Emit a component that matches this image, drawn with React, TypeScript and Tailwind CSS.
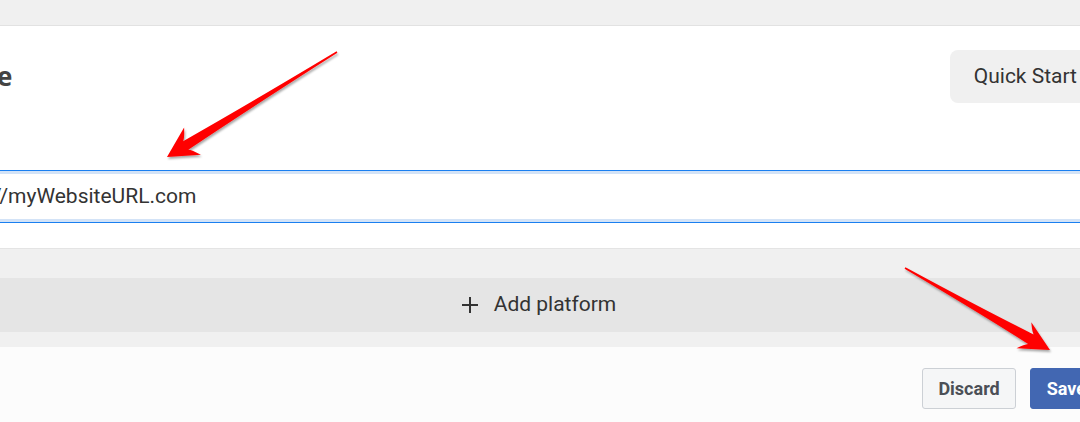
import React from 'react'

type Pt = [number, number]

// builds a tapered red pointer from tail to tip
const arrowPath = (tail: Pt, tip: Pt, shaft = 5, barb = 16) => {
  const dx = tip[0] - tail[0]
  const dy = tip[1] - tail[1]
  const len = Math.hypot(dx, dy)
  const d: Pt = [dx / len, dy / len]
  const n: Pt = [-d[1], d[0]]
  const at = (back: number, side: number): string =>
    `${(tip[0] - d[0] * back + n[0] * side).toFixed(1)} ${(tip[1] - d[1] * back + n[1] * side).toFixed(1)}`
  const tA = `${(tail[0] + n[0] * 0.8).toFixed(1)} ${(tail[1] + n[1] * 0.8).toFixed(1)}`
  const tB = `${(tail[0] - n[0] * 0.8).toFixed(1)} ${(tail[1] - n[1] * 0.8).toFixed(1)}`
  return [
    `M ${tB}`,
    `Q ${at(len * 0.45, -shaft * 0.45)} ${at(22, -shaft)}`,
    `Q ${at(25, -shaft * 1.4)} ${at(30, -barb)}`,
    `L ${at(0, 0)}`,
    `L ${at(30, barb)}`,
    `Q ${at(25, shaft * 1.4)} ${at(22, shaft)}`,
    `Q ${at(len * 0.45, shaft * 0.45)} ${tA}`,
    'Z',
  ].join(' ')
}

const Arrows = () => (
  <svg className="pointer-events-none absolute inset-0" width={1080} height={422}>
    <defs>
      <filter id="arrowShadow" x="-10%" y="-10%" width="120%" height="130%">
        <feDropShadow dx="1" dy="2" stdDeviation="1.2" floodColor="#000" floodOpacity="0.35" />
      </filter>
    </defs>
    <path d={arrowPath([337, 52], [167, 157], 5, 16)} fill="#ff0000" filter="url(#arrowShadow)" />
    <path d={arrowPath([905, 268], [1050, 350], 5.5, 15)} fill="#ff0000" filter="url(#arrowShadow)" />
  </svg>
)

const PlusIcon = () => (
  <svg width="16" height="16" viewBox="0 0 16 16" className="text-[#333]">
    <path d="M8 0v16M0 8h16" stroke="currentColor" strokeWidth="2" fill="none" />
  </svg>
)

export default function App() {
  return (
    <div className="relative h-[422px] w-[1080px] overflow-hidden bg-[#f0f0f0] font-['Roboto',sans-serif]">
      <div className="-ml-[100px] flex w-[1280px] flex-col">
        <div className="h-[26px] border-b border-[#e2e2e2]" />

        <section className="flex h-[223px] flex-col border-b border-[#e4e4e4] bg-white pl-[19px] pr-[79px] pt-6">
          <div className="flex h-[53px] items-center">
            <h2 className="-ml-[11px] font-['Open_Sans',sans-serif] text-[26px] font-bold text-[#444]">
              Website
            </h2>
            <button className="ml-auto h-[53px] rounded-lg bg-[#f0f0f0] px-6 text-[21px] text-[#333]">
              Quick Start
            </button>
          </div>
          <div className="mt-[67px] flex h-[53px] items-center border border-[#1a7ff0] bg-white pl-[20px] text-[21px] text-[#333] shadow-[inset_0_0_0_3px_#d3e3f7]">
            https://myWebsiteURL.com
          </div>
        </section>

        <div className="h-[29px]" />
        <button className="-ml-[2px] flex h-[54px] items-center justify-center gap-4 bg-[#e5e5e5] text-[21px] text-[#333]">
          <PlusIcon />
          <span>Add platform</span>
        </button>
        <div className="h-[15px]" />

        <footer className="flex h-[75px] items-start justify-end bg-[#fcfcfc] pr-[77px] pt-[21px]">
          <div className="flex gap-[14px]">
            <button className="h-[41px] rounded-[3px] border border-[#ccd0d5] bg-[#f5f6f7] px-[15px] text-[18px] font-bold text-[#4b4f56]">
              Discard
            </button>
            <button className="h-[41px] rounded-[3px] border border-[#4267b2] bg-[#4267b2] px-4 text-[18px] font-bold text-white">
              Save
            </button>
          </div>
        </footer>
      </div>
      <Arrows />
    </div>
  )
}
